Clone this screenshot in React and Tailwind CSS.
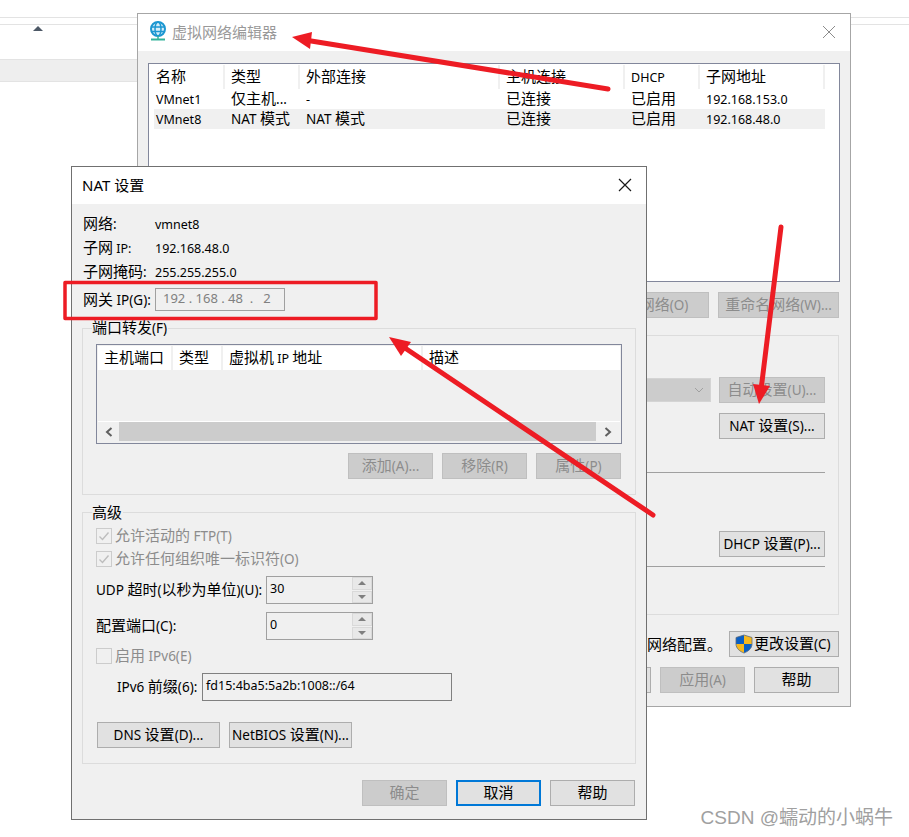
import React from "react";

const CJK = /[\u2E80-\u9FFF\uFF00-\uFFEF\u3000-\u303F]/;

function T({ children, dim, className = "" }) {
  const s = String(children);
  const runs = s.match(/[\u2E80-\u9FFF\uFF00-\uFFEF\u3000-\u303F]+|[^\u2E80-\u9FFF\uFF00-\uFFEF\u3000-\u303F]+/g) || [];
  const mixed = CJK.test(s);
  return (
    <span className={`whitespace-pre leading-none ${dim ? "text-[#8c8c8c]" : "text-black"} ${className}`}>
      {runs.map((r, i) =>
        CJK.test(r) ? (
          <span key={i} className="text-[15px] [font-family:'Noto_Sans_CJK_SC',sans-serif]">{r}</span>
        ) : (
          <span
            key={i}
            className={`${mixed && !/^\s*IP[: ]/.test(r) ? "text-[13.5px]" : "text-[12.5px]"} [font-family:'Noto_Sans','Noto_Sans_CJK_SC',sans-serif]`}
          >
            {r}
          </span>
        )
      )}
    </span>
  );
}

function Btn({ children, dis, focus, w = "w-[85px]", className = "" }) {
  return (
    <div
      className={`${w} h-[26px] shrink-0 flex items-center justify-center pb-[2px] ${
        focus
          ? "border-2 border-[#0078d7] bg-[#e1e1e1]"
          : dis
          ? "border border-[#bfbfbf] bg-[#cccccc]"
          : "border border-[#adadad] bg-[#e1e1e1]"
      } ${className}`}
    >
      <T dim={dis}>{children}</T>
    </div>
  );
}

function Check({ checked, label }) {
  return (
    <div className="flex items-center h-[16px]">
      <div className="w-[16px] h-[16px] border border-[#cccccc] bg-[#f0f0f0] flex items-center justify-center shrink-0">
        {checked && (
          <svg width="12" height="12" viewBox="0 0 12 12" fill="none">
            <path d="M1.5 6.5 L4.5 9.5 L10.5 2.5" stroke="#bdbdbd" strokeWidth="1.4" />
          </svg>
        )}
      </div>
      <div className="ml-[3px] pb-[1px] flex items-center"><T dim>{label}</T></div>
    </div>
  );
}

function Spinner({ value }) {
  return (
    <div className="w-[107px] h-[28px] border border-[#a0a0a0] bg-[#f0f0f0] flex">
      <div className="flex-1 pl-[3px] pt-[2px] leading-[14px]"><T>{value}</T></div>
      <div className="w-[20px] flex flex-col gap-[1px] bg-[#f0f0f0]">
        <div className="flex-1 bg-[#e8e8e8] border border-[#d9d9d9] flex items-center justify-center">
          <div className="w-0 h-0 border-x-[4px] border-x-transparent border-b-[4px] border-b-[#7f7f7f]" />
        </div>
        <div className="flex-1 bg-[#e8e8e8] border border-[#d9d9d9] flex items-center justify-center">
          <div className="w-0 h-0 border-x-[4px] border-x-transparent border-t-[4px] border-t-[#7f7f7f]" />
        </div>
      </div>
    </div>
  );
}

function Group({ label, className = "", children }) {
  return (
    <div className={`relative border border-[#dcdcdc] ${className}`}>
      {label && (
        <div className="absolute left-[9px] top-[-9px] bg-[#f0f0f0] h-[16px] flex items-center pr-[1px] pb-[1px]">
          <T>{label}</T>
        </div>
      )}
      {children}
    </div>
  );
}

function HeadCell({ w, children, last }) {
  return (
    <div className={`${w} h-[24px] flex items-center pl-[6px] pb-[2px] shrink-0 ${last ? "" : "border-r-2 border-[#f0f0f0]"}`}>
      <T>{children}</T>
    </div>
  );
}

function Cell({ w, children, first }) {
  return (
    <div className={`${w} h-[20px] flex items-center ${first ? "pl-[2px]" : "pl-[6px]"} pb-[2px] shrink-0`}>
      <T>{children}</T>
    </div>
  );
}

function BackWindow() {
  return (
    <div className="absolute left-[137px] top-[13px] w-[714px] h-[694px] border border-[#a6a6a6] bg-[#f0f0f0] flex flex-col">
      <div className="h-[37px] bg-white flex items-center pl-[11px] shrink-0 relative">
        <svg className="-mt-[3px]" width="18" height="20" viewBox="0 0 18 20" fill="none">
          <circle cx="9" cy="8" r="7" fill="#d6eef9" stroke="#1c97d1" strokeWidth="2" />
          <ellipse cx="9" cy="8" rx="3" ry="7" stroke="#1c97d1" strokeWidth="1.5" />
          <path d="M2 6H16M2 10.5H16" stroke="#1c97d1" strokeWidth="1.5" />
          <path d="M2 18.5H16" stroke="#32b39a" strokeWidth="2" />
          <path d="M9 15V18" stroke="#32b39a" strokeWidth="1.5" />
        </svg>
        <span className="ml-[5px] text-[15px] text-[#999999] [font-family:'Noto_Sans_CJK_SC',sans-serif]">虚拟网络编辑器</span>
        <svg className="absolute right-[14px] top-[11px]" width="14" height="14" viewBox="0 0 14 14" fill="none">
          <path d="M1 1L13 13M13 1L1 13" stroke="#8c8c8c" strokeWidth="1" />
        </svg>
      </div>

      <div className="ml-[10px] mt-[12px] h-[219px] w-[692px] border border-[#82879b] bg-white pl-[1px] pt-[1px] shrink-0">
        <div className="flex">
          <HeadCell w="w-[75px]">名称</HeadCell>
          <HeadCell w="w-[75px]">类型</HeadCell>
          <HeadCell w="w-[200px]">外部连接</HeadCell>
          <HeadCell w="w-[125px]">主机连接</HeadCell>
          <HeadCell w="w-[75px]">DHCP</HeadCell>
          <HeadCell w="w-[125px]">子网地址</HeadCell>
        </div>
        <div className="flex w-[671px] ml-[4px]">
          <Cell first w="w-[71px]">VMnet1</Cell>
          <Cell w="w-[75px]">仅主机...</Cell>
          <Cell w="w-[200px]">-</Cell>
          <Cell w="w-[125px]">已连接</Cell>
          <Cell w="w-[75px]">已启用</Cell>
          <Cell w="w-[125px]">192.168.153.0</Cell>
        </div>
        <div className="flex w-[671px] ml-[4px] bg-[#f0f0f0]">
          <Cell first w="w-[71px]">VMnet8</Cell>
          <Cell w="w-[75px]">NAT 模式</Cell>
          <Cell w="w-[200px]">NAT 模式</Cell>
          <Cell w="w-[125px]">已连接</Cell>
          <Cell w="w-[75px]">已启用</Cell>
          <Cell w="w-[125px]">192.168.48.0</Cell>
        </div>
      </div>

      <div className="flex justify-end gap-[9px] mt-[10px] pr-[11px] shrink-0">
        <Btn dis w="w-[120px]">移除网络(O)</Btn>
        <Btn dis w="w-[121px]">重命名网络(W)...</Btn>
      </div>

      <Group className="ml-[300px] mr-[11px] mt-[17px] h-[280px] shrink-0 flex flex-col items-end pr-[13px]">
        <div className="mt-[41px] flex gap-[8px] items-center">
          <div className="w-[200px] h-[24px] bg-[#cccccc] border border-[#d4d4d4] flex items-center justify-end pr-[6px]">
            <svg width="10" height="6" viewBox="0 0 10 6" fill="none"><path d="M1 1L5 5L9 1" stroke="#a0a0a0" /></svg>
          </div>
          <Btn dis w="w-[106px]">自动设置(U)...</Btn>
        </div>
        <Btn w="w-[106px]" className="mt-[10px]">NAT 设置(S)...</Btn>
        <div className="mt-[33px] w-full h-px bg-[#a0a0a0]" />
        <Btn w="w-[106px]" className="mt-[58px]">DHCP 设置(P)...</Btn>
        <div className="mt-[9px] w-full h-px bg-[#a0a0a0]" />
      </Group>

      <div className="flex justify-end items-center gap-[7px] mt-[16px] pr-[11px] shrink-0">
        <T>网络配置。</T>
        <div className="w-[110px] h-[26px] border border-[#adadad] bg-[#e1e1e1] flex items-center pl-[5px]">
          <svg width="18" height="20" viewBox="0 0 18 20">
            <path d="M9 1L17 3.5V10H9V1Z" fill="#f6b81e" />
            <path d="M9 1L1 3.5V10H9V1Z" fill="#0a5fc4" />
            <path d="M9 10H17C17 14.5 13 17.5 9 19V10Z" fill="#0a5fc4" />
            <path d="M1 10H9V19C5 17.5 1 14.5 1 10Z" fill="#f6b81e" />
            <path d="M9 1L1 3.5V10C1 14.5 5 17.5 9 19C13 17.5 17 14.5 17 10V3.5L9 1Z" fill="none" stroke="#5a6a7a" strokeWidth="0.8" />
          </svg>
          <div className="ml-[1px] pb-[2px] flex items-center"><T>更改设置(C)</T></div>
        </div>
      </div>

      <div className="flex justify-end gap-[9px] mt-[10px] pr-[11px] shrink-0">
        <Btn>取消</Btn>
        <Btn dis>应用(A)</Btn>
        <Btn>帮助</Btn>
      </div>
    </div>
  );
}

function Info({ label, value }) {
  return (
    <div className="flex items-center h-[24px] pb-[1px]">
      <div className="w-[72px] flex items-center"><T>{label}</T></div>
      <T>{value}</T>
    </div>
  );
}

function NatWindow() {
  return (
    <div className="absolute left-[71px] top-[166px] w-[576px] h-[654px] border border-[#707070] bg-[#f0f0f0] flex flex-col">
      <div className="h-[37px] bg-white flex items-center pl-[10px] shrink-0 relative">
        <span className="text-[15px] text-black [font-family:'Noto_Sans','Noto_Sans_CJK_SC',sans-serif]">NAT 设置</span>
        <svg className="absolute right-[14px] top-[11px]" width="14" height="14" viewBox="0 0 14 14" fill="none">
          <path d="M1 1L13 13M13 1L1 13" stroke="#1a1a1a" strokeWidth="1.2" />
        </svg>
      </div>

      <div className="pl-[11px] pt-[8px] shrink-0">
        <Info label="网络:" value="vmnet8" />
        <Info label="子网 IP:" value="192.168.48.0" />
        <Info label="子网掩码:" value="255.255.255.0" />
        <div className="flex items-center h-[23px] mt-[4px]">
          <div className="w-[72px] pb-[1px] flex items-center"><T>网关 IP(G):</T></div>
          <div className="w-[130px] h-[23px] border border-[#a0a0a0] bg-[#f0f0f0] flex items-center pl-[7px] pb-[1px]">
            <span className="whitespace-pre text-[13px] text-[#808080] [font-family:'Noto_Sans',sans-serif]">{"192 . 168 . 48  .   2"}</span>
          </div>
        </div>
      </div>

      <Group label="端口转发(F)" className="ml-[10px] mt-[17px] w-[554px] h-[167px] shrink-0 px-[13px] pt-[15px]">
        <div className="w-[526px] h-[100px] border border-[#82879b] flex flex-col p-[1px] bg-[#f0f0f0]">
          <div className="flex bg-white">
            <HeadCell w="w-[75px]">主机端口</HeadCell>
            <HeadCell w="w-[50px]">类型</HeadCell>
            <HeadCell w="w-[200px]">虚拟机 IP 地址</HeadCell>
            <div className="flex-1 h-[24px] flex items-center pl-[6px] pb-[2px]"><T>描述</T></div>
          </div>
          <div className="mt-auto mb-[1px] h-[20px] flex border-t border-white bg-[#f0f0f0] items-center">
            <div className="w-[21px] flex justify-center">
              <svg width="8" height="10" viewBox="0 0 8 10" fill="none"><path d="M6.5 1L2 5L6.5 9" stroke="#606060" strokeWidth="2" /></svg>
            </div>
            <div className="flex-1 h-[19px] bg-[#cccccc]" />
            <div className="w-[24px] flex justify-center">
              <svg width="8" height="10" viewBox="0 0 8 10" fill="none"><path d="M1.5 1L6 5L1.5 9" stroke="#606060" strokeWidth="2" /></svg>
            </div>
          </div>
        </div>
        <div className="flex justify-end gap-[9px] mt-[9px] pr-[1px]">
          <Btn dis>添加(A)...</Btn>
          <Btn dis>移除(R)</Btn>
          <Btn dis>属性(P)</Btn>
        </div>
      </Group>

      <Group label="高级" className="ml-[10px] mt-[17px] w-[554px] h-[252px] shrink-0 pl-[13px]">
        <div className="pt-[15px] flex flex-col gap-[7px]">
          <Check checked label="允许活动的 FTP(T)" />
          <Check checked label="允许任何组织唯一标识符(O)" />
        </div>
        <div className="flex items-center mt-[9px]">
          <div className="w-[170px] flex items-center pb-[1px]"><T>UDP 超时(以秒为单位)(U):</T></div>
          <Spinner value="30" />
        </div>
        <div className="flex items-center mt-[8px]">
          <div className="w-[170px] flex items-center pb-[1px]"><T>配置端口(C):</T></div>
          <Spinner value="0" />
        </div>
        <div className="mt-[8px]"><Check label="启用 IPv6(E)" /></div>
        <div className="flex items-center mt-[9px] pl-[21px]">
          <div className="w-[85px] flex items-center pb-[1px]"><T>IPv6 前缀(6):</T></div>
          <div className="w-[250px] h-[28px] border border-[#808080] bg-[#f0f0f0] pl-[3px] pt-[2px] leading-[16px]">
            <T>fd15:4ba5:5a2b:1008::/64</T>
          </div>
        </div>
        <div className="flex gap-[9px] mt-[21px] pl-[1px]">
          <Btn w="w-[123px]">DNS 设置(D)...</Btn>
          <Btn w="w-[123px]">NetBIOS 设置(N)...</Btn>
        </div>
      </Group>

      <div className="flex justify-end gap-[9px] mt-[16px] pr-[11px] shrink-0">
        <Btn dis>确定</Btn>
        <Btn focus>取消</Btn>
        <Btn>帮助</Btn>
      </div>
    </div>
  );
}

function Arrows() {
  const c = "#ed1c24";
  return (
    <svg className="absolute inset-0 pointer-events-none" width="909" height="837" viewBox="0 0 909 837" fill="none">
      <path d="M608 89 L305 40" stroke={c} strokeWidth="5" strokeLinecap="round" />
      <path d="M292 37 L312 32 L310 49 Z" fill={c} />
      <path d="M781 227 L761 390" stroke={c} strokeWidth="5" strokeLinecap="round" />
      <path d="M759 404 L753 384 L770 386 Z" fill={c} />
      <path d="M653 515 L402 346" stroke={c} strokeWidth="5" strokeLinecap="round" />
      <path d="M389 337 L411 342 L401 356 Z" fill={c} />
      <path d="M65 282.5 H376 V318.5 H65 Z" stroke={c} strokeWidth="3.5" strokeLinejoin="round" />
    </svg>
  );
}

export default function App() {
  return (
    <div className="relative w-[909px] h-[837px] bg-white overflow-hidden pt-[17px] [font-family:'Noto_Sans','Noto_Sans_CJK_SC',sans-serif]">
      <div className="h-px bg-[#e3e3e3]" />
      <div className="mt-[6px] h-px bg-[#e3e3e3]" />
      <div className="ml-[33px] mt-px w-0 h-0 border-x-[5px] border-x-transparent border-b-[5px] border-b-[#4d5866]" />
      <div className="mt-[28px] h-[23px] w-[137px] bg-[#eeeeee] border-y border-[#e3e3e3]" />
      <BackWindow />
      <NatWindow />
      <Arrows />
      <div className="absolute right-[16px] top-[806px] text-[19px] leading-[24px] text-[#a0a0a0] [font-family:'Liberation_Sans','Noto_Sans_CJK_SC',sans-serif]">CSDN @蠕动的小蜗牛</div>
    </div>
  );
}
